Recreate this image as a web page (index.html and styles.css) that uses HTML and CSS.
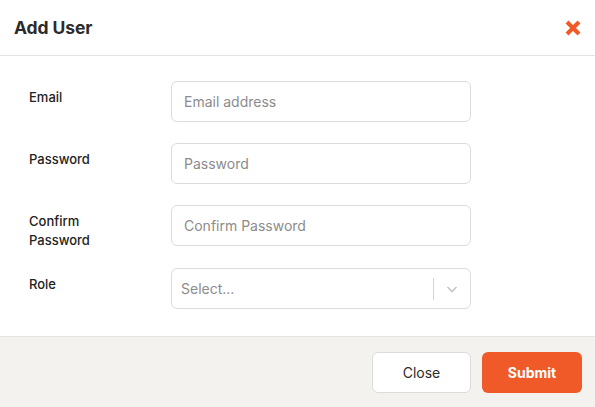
FILE: index.html
```html
<!DOCTYPE html>
<html>
<head>
<meta charset="utf-8">
<link rel="stylesheet" href="styles.css">
</head>
<body>
<div class="modal">
  <div class="modal-header">
    <h1 class="title">Add User</h1>
    <button class="close-x" aria-label="Close">
      <svg width="18" height="18" viewBox="0 0 18 18"><path d="M3 3 L15 15 M15 3 L3 15" stroke="#f05a28" stroke-width="4" stroke-linecap="butt"/></svg>
    </button>
  </div>
  <div class="modal-body">
    <div class="row">
      <label class="label">Email</label>
      <div class="input">Email address</div>
    </div>
    <div class="row">
      <label class="label">Password</label>
      <div class="input">Password</div>
    </div>
    <div class="row">
      <label class="label">Confirm<br>Password</label>
      <div class="input">Confirm Password</div>
    </div>
    <div class="row row-last">
      <label class="label">Role</label>
      <div class="input select">
        <span class="select-value">Select...</span>
        <span class="sep"></span>
        <span class="chev">
          <svg width="14" height="14" viewBox="0 0 14 14"><path d="M2.5 5 L7 9.5 L11.5 5" fill="none" stroke="#c4c4c4" stroke-width="1.6"/></svg>
        </span>
      </div>
    </div>
  </div>
  <div class="modal-footer">
    <button class="btn btn-close">Close</button>
    <button class="btn btn-submit">Submit</button>
  </div>
</div>
</body>
</html>
```
FILE: styles.css
```css
* { box-sizing: border-box; }
html, body { margin: 0; padding: 0; background: #fff; }
body { font-family: Inter, "Noto Sans", sans-serif; color: #222; }
.modal { width: 595px; height: 407px; display: flex; flex-direction: column; }
.modal-header {
  height: 56px; flex: none; display: flex; align-items: center; justify-content: space-between;
  padding: 0 13px 0 14px; border-bottom: 1px solid #e3e3e3;
}
.title { margin: 0; font-size: 17.5px; font-weight: 700; color: #2b2b2b; letter-spacing: -0.1px; }
.close-x { border: 0; background: none; padding: 0; width: 18px; height: 18px; display: flex; }
.modal-body { padding: 25px 0 0 29px; display: flex; flex-direction: column; gap: 21px; flex: 1; }
.row { display: flex; align-items: flex-start; height: 41px; }
.row-last { margin-top: 1px; }
.label { width: 142px; font-size: 13px; font-weight: 500; line-height: 19px; padding-top: 7px; color: #222; }
.input {
  width: 300px; height: 41px; border: 1px solid #dcdcdc; border-radius: 6px;
  display: flex; align-items: center; padding: 0 12px; font-size: 14px; color: #8c8c8c;
}
.select { padding: 0 0 0 9px; }
.select-value { flex: 1; }
.sep { width: 1px; height: 22px; background: #d4d4d4; }
.chev { width: 36px; display: flex; align-items: center; justify-content: center; }
.modal-footer {
  height: 71px; flex: none; background: #f3f2ef; border-top: 1px solid #e3e3e3;
  display: flex; justify-content: flex-end; align-items: flex-start; gap: 11px; padding: 15px 13px 0 0;
}
.btn {
  height: 41px; width: 100px; border-radius: 6px; font-family: inherit; font-size: 14px;
}
.btn-close { width: 99px; background: #fff; border: 1px solid #dcdcdc; color: #2b2b2b; }
.btn-submit { background: #f05a28; border: 0; color: #fff; font-weight: 700; }
```
